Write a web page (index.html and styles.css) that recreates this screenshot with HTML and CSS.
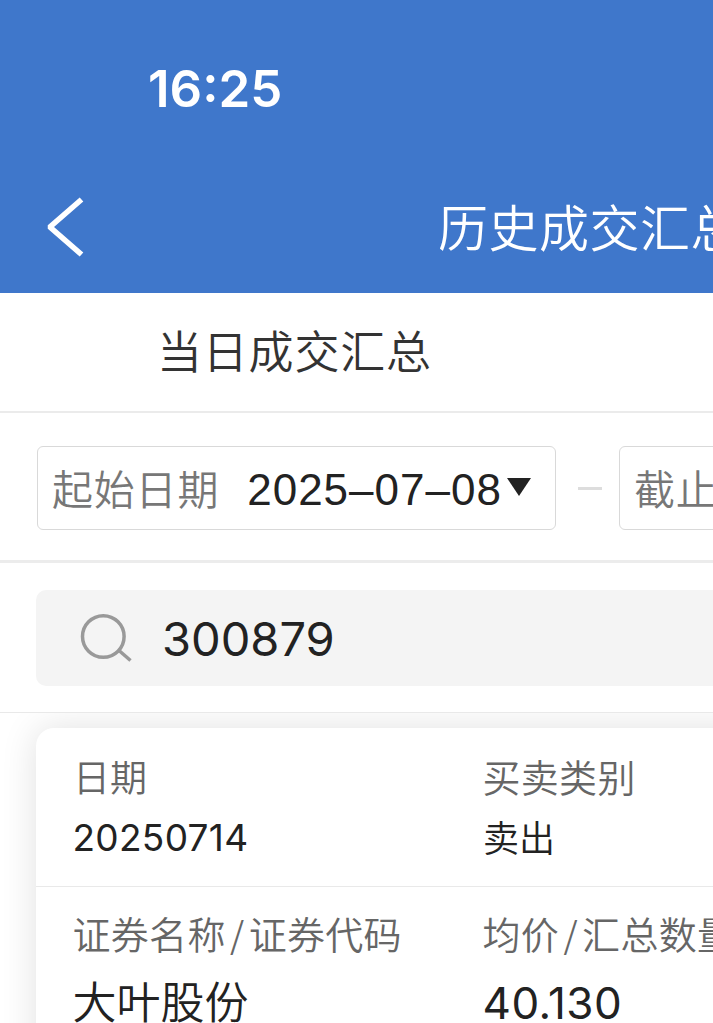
FILE: index.html
```html
<!DOCTYPE html>
<html lang="zh-CN">
<head>
<meta charset="utf-8">
<meta name="viewport" content="width=device-width">
<title>历史成交汇总</title>
<link rel="stylesheet" href="styles.css">
</head>
<body>
<header class="header">
  <div class="status"><span class="clock">16:25</span></div>
  <div class="navbar">
    <svg class="back" width="40" height="64" viewBox="0 0 40 64"><path d="M35.5 4.500 4.500 31.500v1l31 27" fill="none" stroke="#fff" stroke-width="5.500"/></svg>
    <h1 class="title">历史成交汇总</h1>
  </div>
</header>
<nav class="tabs"><span class="tab">当日成交汇总</span></nav>
<section class="dates">
  <div class="date-box"><span class="date-label">起始日期</span><span class="date-value">2025–07–08</span><svg class="caret" width="24" height="18" viewBox="0 0 24 18"><path d="M0 0h24L12 18z" fill="#222"/></svg></div>
  <span class="dash"></span>
  <div class="date-box date-end"><span class="date-label">截止日期</span></div>
</section>
<section class="search">
  <div class="search-box">
    <svg class="glass" width="54" height="50" viewBox="0 0 54 50"><circle cx="23.300" cy="23.500" r="20.800" fill="none" stroke="#999" stroke-width="3.500"/><path d="m39 37.500 11.500 10" stroke="#999" stroke-width="3.500"/></svg>
    <span class="query">300879</span>
  </div>
</section>
<main class="results">
  <article class="card">
    <div class="row">
      <div class="cell"><span class="label label-date">日期</span><span class="value value-date">20250714</span></div>
      <div class="cell"><span class="label">买卖类别</span><span class="value value-side">卖出</span></div>
    </div>
    <div class="row row-main">
      <div class="cell"><span class="label">证券名称<i class="slash">/</i>证券代码</span><span class="value value-name">大叶股份</span></div>
      <div class="cell"><span class="label">均价<i class="slash">/</i>汇总数量</span><span class="value value-price">40.130</span></div>
    </div>
  </article>
</main>
</body>
</html>
```
FILE: styles.css
```css
* { box-sizing: border-box; }
html, body { margin: 0; height: 1023px; overflow: hidden; }
body { width: 713px; background: #fff; color: #222; font-family: Inter, "Noto Sans CJK SC", sans-serif; white-space: nowrap; }
.header { height: 293px; background: #3f77cb; color: #fff; }
.status { height: 160px; padding: 59px 0 0 148px; }
.clock { display: block; font-size: 51px; line-height: 60px; font-weight: 600; }
.navbar { height: 133px; display: flex; padding-left: 46px; }
.back { margin-top: 35px; flex: none; }
.title { margin: 33px 0 0 352px; font-size: 50px; line-height: 72px; font-weight: 350; letter-spacing: .5px; }
.tabs { height: 120px; padding: 27px 0 0 157px; border-bottom: 2px solid #ebebeb; }
.tab { display: block; font-size: 45px; line-height: 66px; color: #333; font-weight: 350; letter-spacing: .8px; }
.dates { height: 150px; display: flex; padding: 33px 0 0 37px; border-bottom: 3px solid #ececec; }
.date-box { width: 519px; height: 84px; flex: none; display: flex; align-items: center; padding-left: 14px; border: 1.5px solid #d9d9d9; border-radius: 6px; }
.date-label { font-size: 41px; line-height: 60px; margin-top: 3px; color: #777; font-weight: 350; letter-spacing: .8px; }
.date-value { margin: 4px 0 0 28px; font-family: "Liberation Sans", sans-serif; font-size: 44px; letter-spacing: 1px; }
.caret { margin-left: 5px; margin-bottom: 2px; }
.dash { flex: none; width: 24px; height: 3px; margin: 41px 17px 0 22px; background: #ddd; }
.search { height: 150px; padding: 27px 0 0 36px; border-bottom: 1px solid #e9e9e9; }
.search-box { height: 96px; display: flex; align-items: center; background: #f4f4f4; border-radius: 10px 0 0 10px; padding-left: 44px; }
.query { margin: 1px 0 0 28px; font-size: 47px; }
.results { padding: 15px 0 0 36px; height: 310px; overflow: hidden; }
.card { height: 350px; margin-right: -36px; background: #fff; border-radius: 18px 0 0 0; box-shadow: 0 0 36px rgba(0,0,0,.12); }
.row { height: 159px; display: grid; grid-template-columns: 410px 1fr; padding: 22px 0 0 37px; border-bottom: 1px solid #e9e9e9; }
.row-main { padding-top: 20px; }
.cell { display: flex; flex-direction: column; }
.label { font-size: 38px; line-height: 56px; margin-left: -.5px; color: #666; font-weight: 350; letter-spacing: .3px; }
.label-date { font-size: 37px; line-height: 58px; margin-bottom: -2px; margin-left: 0; letter-spacing: 0; }
.value { font-size: 36px; line-height: 56px; margin-top: 3px; }
.value-date { font-size: 37px; letter-spacing: .3px; margin: 4px 0 0 -.5px; }
.value-side { font-weight: 350; margin-top: 5px; }
.row-main .value { font-size: 44px; line-height: 64px; margin-top: 8px; margin-left: -.5px; }
.row-main .value-name { font-weight: 350; }
.row-main .value-price { letter-spacing: .5px; }
.slash { display: inline-block; width: 23px; text-align: center; font-style: normal; font-family: "Noto Sans CJK SC", sans-serif; font-size: 36px; line-height: 40px; }
```
